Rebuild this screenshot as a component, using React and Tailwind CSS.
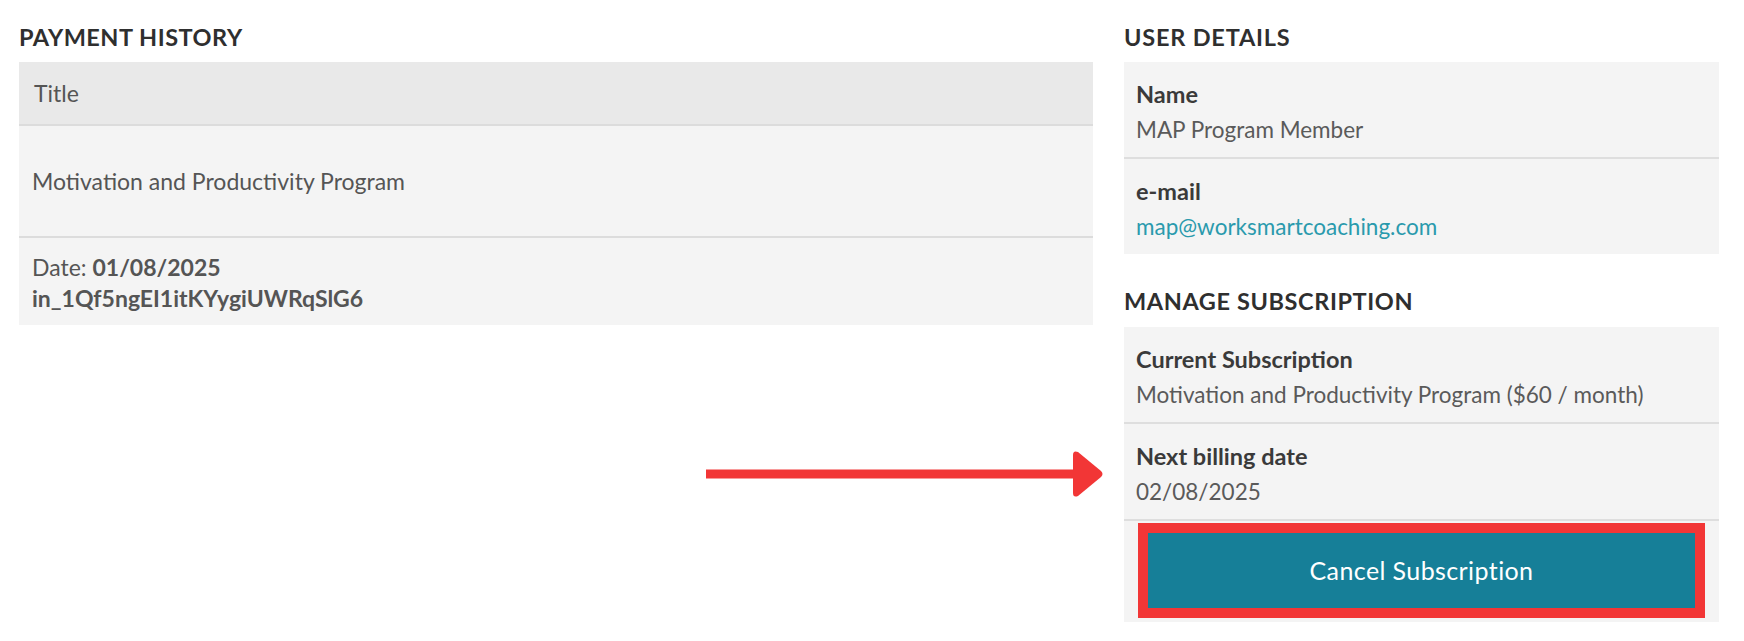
import React from 'react';

const body = { fontFamily: 'Lato, "Noto Sans", sans-serif' };

function Field({ label, children, last }) {
  return (
    <div className={`px-3 pt-[15px] pb-[9px] ${last ? '' : 'border-b-2 border-[#dedede]'}`}>
      <div className="text-[23.5px] leading-[35px] font-bold text-[#3a3a3a]">{label}</div>
      <div className="text-[22.5px] leading-[36px] text-[#5a5a5a]">{children}</div>
    </div>
  );
}

export default function App() {
  return (
    <div className="relative w-[1744px] h-[641px] bg-white overflow-hidden" style={body}>
      <div className="flex gap-[31px] pl-[19px] pr-[25px] pt-[22px]">
        {/* payment history */}
        <div className="w-[1074px]">
          <h2 className="text-[23.5px] leading-[30px] font-bold tracking-[0.5px] text-[#2f2f2f] mb-[10px]">PAYMENT HISTORY</h2>
          <div className="bg-[#f4f4f4]">
            <div className="h-[64px] flex items-center px-[15px] bg-[#e9e9e9] border-b-2 border-[#dcdcdc] text-[23px] text-[#555]">
              Title
            </div>
            <div className="h-[112px] flex items-center px-[13px] border-b-2 border-[#dcdcdc] text-[23px] text-[#555]">
              Motivation and Productivity Program
            </div>
            <div className="px-[13px] pt-[14px] pb-[11px] text-[23px] leading-[31px] text-[#555]">
              <div>
                Date: <span className="font-bold">01/08/2025</span>
              </div>
              <div className="font-bold">in_1Qf5ngEI1itKYygiUWRqSlG6</div>
            </div>
          </div>
        </div>

        {/* right column */}
        <div className="w-[595px]">
          <h2 className="text-[23.5px] leading-[30px] font-bold tracking-[0.8px] text-[#2f2f2f] mb-[10px]">USER DETAILS</h2>
          <div className="bg-[#f4f4f4]">
            <Field label="Name">MAP Program Member</Field>
            <Field label="e-mail" last>
              <span className="text-[#2a9aad]">map@worksmartcoaching.com</span>
            </Field>
          </div>

          <h2 className="mt-[32px] text-[23.5px] leading-[30px] font-bold tracking-[0.6px] text-[#2f2f2f] mb-[11px]">MANAGE SUBSCRIPTION</h2>
          <div className="bg-[#f4f4f4]">
            <Field label="Current Subscription">Motivation and Productivity Program ($60 / month)</Field>
            <Field label="Next billing date">02/08/2025</Field>
            <div className="px-[14px] pt-[2px] pb-[4px]">
              <div className="border-[10px] border-[#f23636]">
                <button className="w-full h-[75px] bg-[#167f98] text-white text-[25px] font-normal tracking-[0.4px]">
                  Cancel Subscription
                </button>
              </div>
            </div>
          </div>
        </div>
      </div>

      {/* annotation arrow */}
      <svg className="absolute left-[700px] top-[445px]" width="410" height="58" viewBox="0 0 410 58">
        <line x1="6" y1="29" x2="380" y2="29" stroke="#f23636" strokeWidth="9" />
        <path d="M373 10 Q373 5 378 7 L401 26 Q404 29 401 32 L378 51 Q373 53 373 48 Z" fill="#f23636" />
      </svg>
    </div>
  );
}
